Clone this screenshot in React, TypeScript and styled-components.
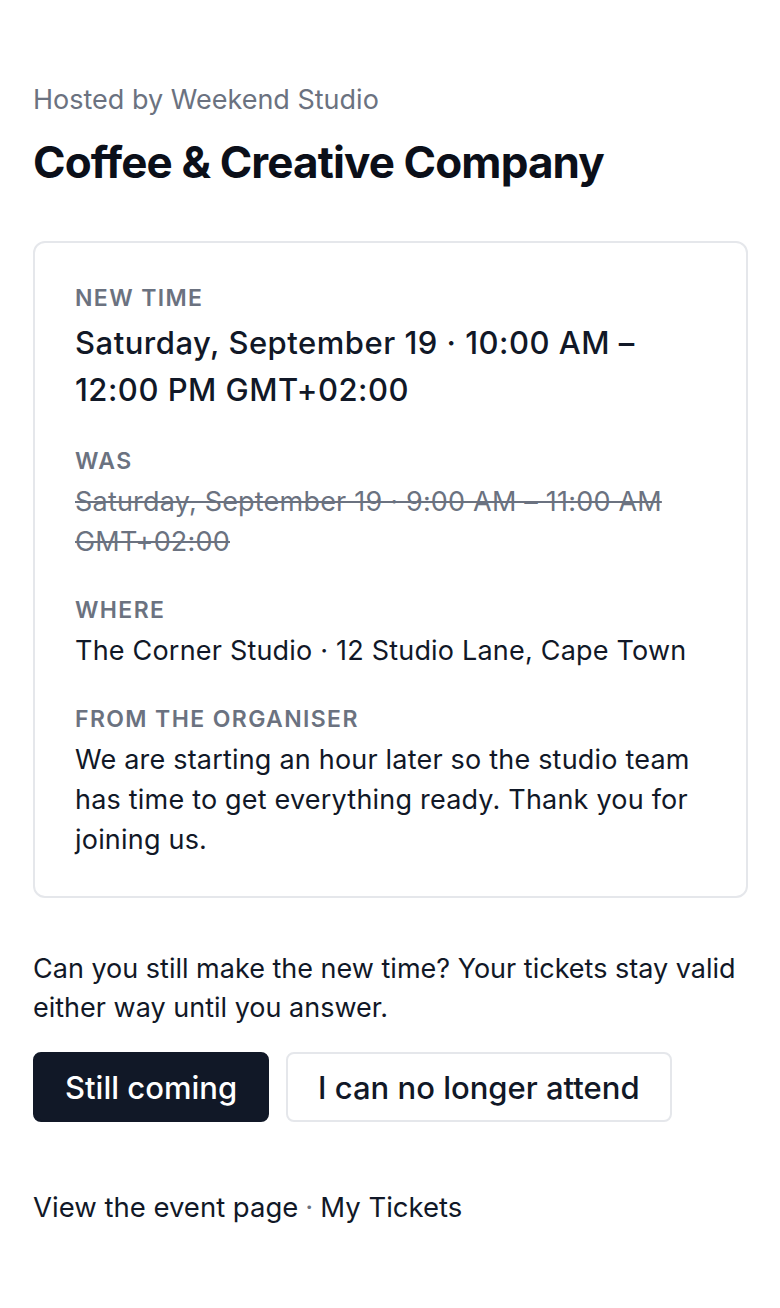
import React from "react";
import styled, { createGlobalStyle } from "styled-components";

const Global = createGlobalStyle`
  html, body { margin: 0; padding: 0; background: #ffffff; }
  body { font-family: Inter, "Noto Sans", Arial, sans-serif; color: #111827; -webkit-font-smoothing: antialiased; }
  * { box-sizing: border-box; }
`;

const Page = styled.main`
  display: flex;
  flex-direction: column;
  padding: 82px 32px 60px 33px;
`;

const Host = styled.div`
  font-size: 27px;
  line-height: 36px;
  color: #6b7280;
`;

const Title = styled.h1`
  margin: 19px 0 0;
  font-size: 44px;
  line-height: 50px;
  font-weight: 700;
  letter-spacing: -0.02em;
  color: #0b0f19;
`;

const Card = styled.section`
  margin-top: 54px;
  border: 2px solid #e5e7eb;
  border-radius: 12px;
  padding: 40px 40px 36px 40px;
  display: flex;
  flex-direction: column;
  gap: 33px;
`;

const Block = styled.div`
  display: flex;
  flex-direction: column;
  gap: 6px;
`;

const Label = styled.div`
  font-size: 23px;
  line-height: 30px;
  font-weight: 600;
  letter-spacing: 0.06em;
  text-transform: uppercase;
  color: #6b7280;
`;

const Value = styled.div<{ $size?: "lg" | "md"; $struck?: boolean }>`
  font-size: ${(p) => (p.$size === "lg" ? "31px" : "27px")};
  line-height: ${(p) => (p.$size === "lg" ? "47px" : "40px")};
  font-weight: ${(p) => (p.$size === "lg" ? 500 : 400)};
  letter-spacing: ${(p) => (p.$size === "lg" ? "0.5px" : "0.2px")};
  color: ${(p) => (p.$struck ? "#6b7280" : "#111827")};
  text-decoration: ${(p) => (p.$struck ? "line-through" : "none")};
`;

const Question = styled.p`
  margin: 51px 0 0;
  font-size: 27px;
  line-height: 39px;
  letter-spacing: 0;
  color: #111827;
`;

const Actions = styled.div`
  display: flex;
  gap: 17px;
  margin-top: 25px;
`;

const Button = styled.button<{ $primary?: boolean }>`
  height: 70px;
  padding: 0 30px;
  border-radius: 8px;
  font-family: inherit;
  font-size: 31px;
  font-weight: 500;
  cursor: pointer;
  background: ${(p) => (p.$primary ? "#111827" : "#ffffff")};
  color: ${(p) => (p.$primary ? "#ffffff" : "#111827")};
  border: 2px solid ${(p) => (p.$primary ? "#111827" : "#e5e7eb")};
`;

const Footer = styled.nav`
  margin-top: 65px;
  font-size: 27.5px;
  line-height: 40px;
  color: #111827;
`;

const FootLink = styled.a`
  color: inherit;
  text-decoration: none;
`;

const Sep = styled.span`
  color: #6b7280;
  padding: 0 7px;
`;

export default function App() {
  return (
    <>
      <Global />
      <Page>
        <Host>Hosted by Weekend Studio</Host>
        <Title>Coffee &amp; Creative Company</Title>
        <Card>
          <Block>
            <Label>New time</Label>
            <Value $size="lg">Saturday, September 19 · 10:00 AM – 12:00 PM GMT+02:00</Value>
          </Block>
          <Block>
            <Label>Was</Label>
            <Value $struck>Saturday, September 19 · 9:00 AM – 11:00 AM GMT+02:00</Value>
          </Block>
          <Block>
            <Label>Where</Label>
            <Value>The Corner Studio · 12 Studio Lane, Cape Town</Value>
          </Block>
          <Block>
            <Label>From the organiser</Label>
            <Value>
              We are starting an hour later so the studio team has time to get everything ready. Thank you for joining us.
            </Value>
          </Block>
        </Card>
        <Question>Can you still make the new time? Your tickets stay valid either way until you answer.</Question>
        <Actions>
          <Button $primary>Still coming</Button>
          <Button>I can no longer attend</Button>
        </Actions>
        <Footer>
          <FootLink href="#">View the event page</FootLink>
          <Sep>·</Sep>
          <FootLink href="#">My Tickets</FootLink>
        </Footer>
      </Page>
    </>
  );
}
